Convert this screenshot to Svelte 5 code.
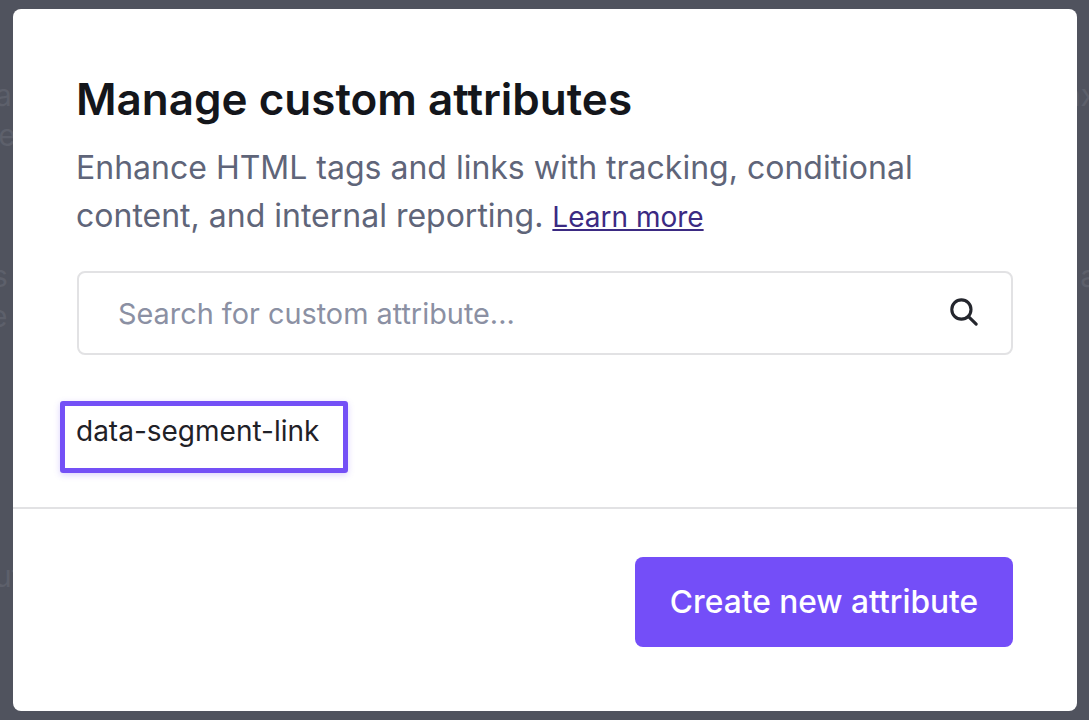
<script lang="ts">
	const behind = [
		{ text: 'a', cls: 'l1' },
		{ text: 'ie', cls: 'l2' },
		{ text: 's', cls: 'l3' },
		{ text: 'e', cls: 'l4' },
		{ text: 'ut', cls: 'l5' },
		{ text: 'ax', cls: 'r1' },
		{ text: 'a', cls: 'r2' }
	];
</script>

<div class="overlay">
	{#each behind as b}
		<span class="ghost {b.cls}">{b.text}</span>
	{/each}

	<div class="modal">
		<div class="body">
			<h1>Manage custom attributes</h1>
			<p class="desc">
				Enhance HTML tags and links with tracking, conditional content, and internal reporting.
				<a href="#learn">Learn more</a>
			</p>

			<div class="search">
				<input type="text" placeholder="Search for custom attribute..." />
				<svg width="30" height="30" viewBox="0 0 30 30" fill="none" stroke="#24262d" stroke-width="3.1" stroke-linecap="round">
					<circle cx="12.4" cy="11.5" r="9.6" />
					<path d="M19.5 18.6l7.7 7.6" />
				</svg>
			</div>

			<div class="item">data-segment-link</div>
		</div>

		<div class="footer">
			<button type="button">Create new attribute</button>
		</div>
	</div>
</div>

<style>
	:global(body) {
		margin: 0;
		background: #50535e;
	}

	.overlay {
		position: relative;
		box-sizing: border-box;
		height: 720px;
		padding: 9px 12px 9px 13px;
		background: #50535e;
		overflow: hidden;
		font-family: Inter, "Liberation Sans", sans-serif;
	}

	.ghost {
		position: absolute;
		font-size: 30px;
		color: #5d606b;
		line-height: 40px;
	}
	.l1 { left: -5px; top: 75px; }
	.l2 { left: -9px; top: 115px; }
	.l3 { left: -8px; top: 256px; }
	.l4 { left: -10px; top: 296px; }
	.l5 { left: -6px; top: 556px; }
	.r1 { right: -8px; top: 75px; }
	.r2 { right: -8px; top: 256px; }

	.modal {
		position: relative;
		height: 702px;
		background: #fff;
		border-radius: 8px;
		display: flex;
		flex-direction: column;
	}

	.body {
		padding: 64px 64px 0 63px;
		height: 500px;
		box-sizing: border-box;
		border-bottom: 2px solid #e2e2e4;
		flex: none;
	}

	h1 {
		margin: 0;
		font-size: 44px;
		line-height: 52px;
		font-weight: 600;
		color: #14161b;
	}

	.desc {
		margin: 19px 0 0;
		font-size: 32px;
		line-height: 48px;
		color: #5f6579;
		width: 900px;
	}

	.desc a {
		font-size: 28px;
		color: #3b2a82;
		text-decoration: underline;
	}

	.search {
		margin: 30px 0 0 1px;
		height: 84px;
		box-sizing: border-box;
		width: 936px;
		border: 2px solid #e2e2e4;
		border-radius: 8px;
		display: flex;
		align-items: center;
		padding: 0 32px 0 39px;
	}

	.search input {
		flex: 1;
		min-width: 0;
		border: 0;
		outline: 0;
		padding: 0;
		background: none;
		font: inherit;
		font-size: 28.85px;
		color: #14161b;
	}

	.search input::placeholder {
		color: #8b90a3;
		opacity: 1;
	}

	.item {
		margin: 46px 0 0 -16px;
		width: fit-content;
		box-sizing: border-box;
		height: 72px;
		padding: 7px 24px 0 11px;
		border: 5px solid #7450f6;
		border-radius: 3px;
		box-shadow: 0 2px 6px rgba(116, 80, 246, 0.25);
		font-size: 28px;
		line-height: 36px;
		color: #1f2127;
	}

	.footer {
		display: flex;
		justify-content: flex-end;
		padding: 48px 64px 0;
	}

	button {
		width: 378px;
		height: 90px;
		padding: 0 0 2px;
		border: 0;
		border-radius: 8px;
		background: #744ef8;
		color: #fff;
		font: inherit;
		font-size: 31.7px;
		font-weight: 500;
	}
</style>
